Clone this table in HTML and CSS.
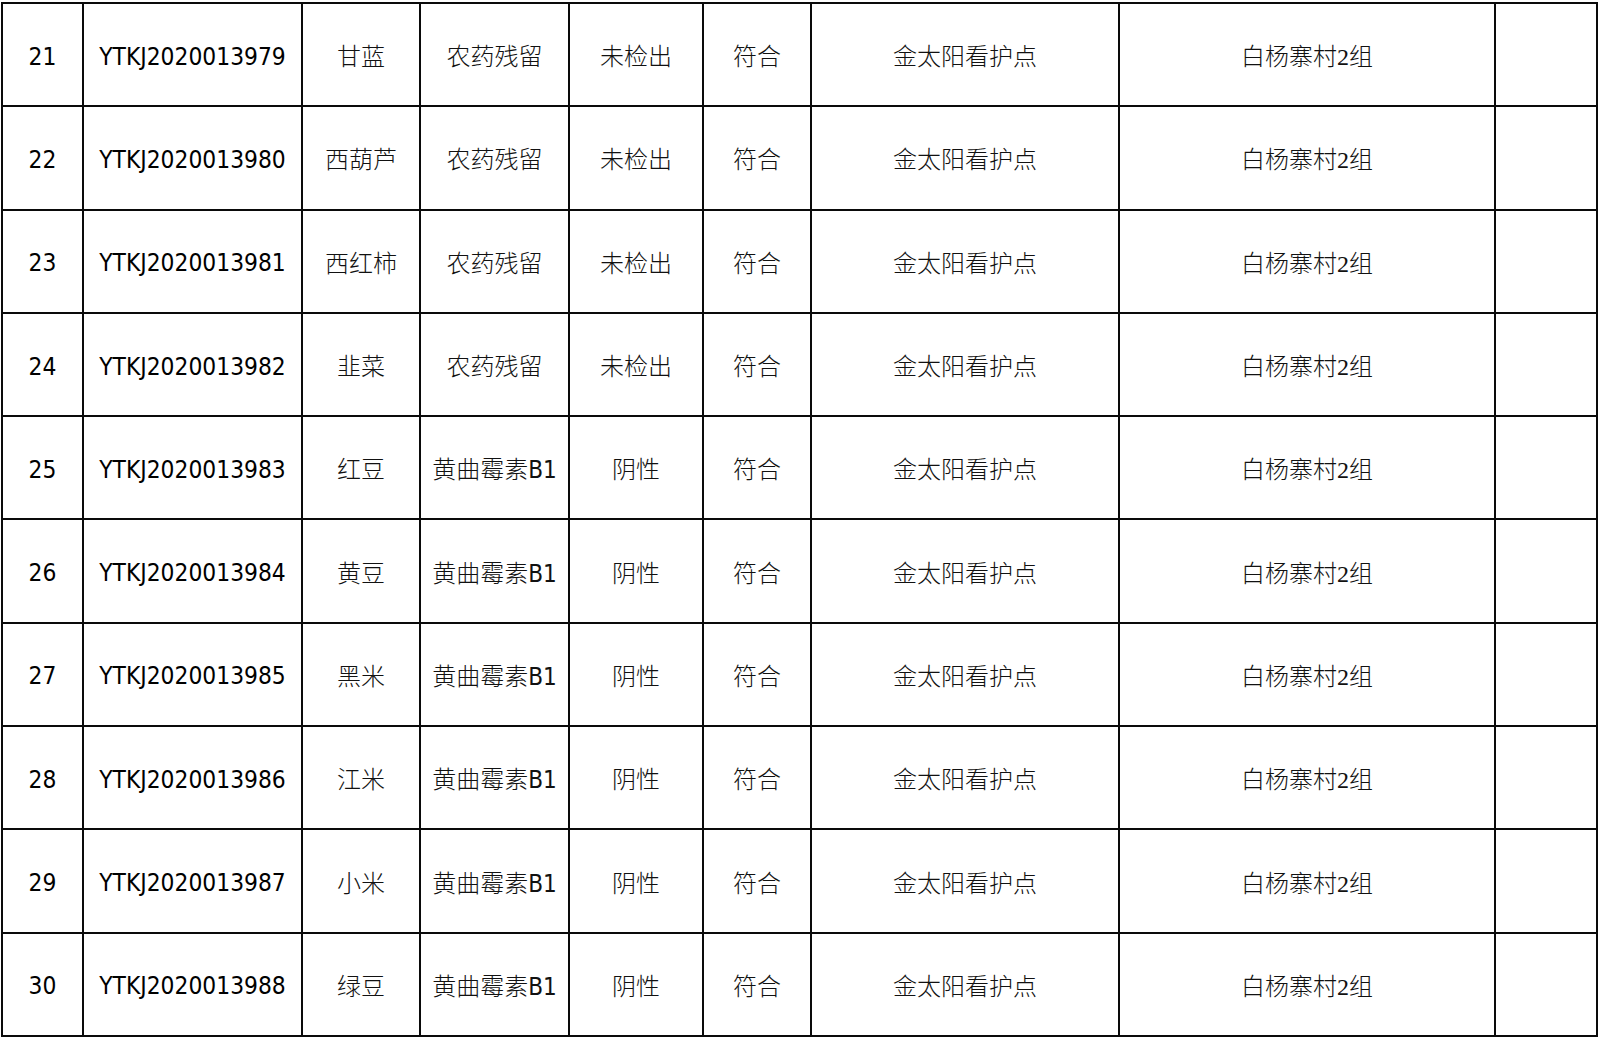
FILE: index.html
```html
<!DOCTYPE html>
<html lang="zh-CN">
<head>
<meta charset="utf-8">
<title>检测结果</title>
<link rel="stylesheet" href="styles.css">
</head>
<body>
<table class="sheet">
  <colgroup>
    <col class="c-no"><col class="c-code"><col class="c-name"><col class="c-item"><col class="c-res"><col class="c-judge"><col class="c-site"><col class="c-addr"><col class="c-note">
  </colgroup>
  <tbody>
    <tr><td class="num">21</td><td class="num">YTKJ2020013979</td><td class="cjk">甘蓝</td><td class="cjk">农药残留</td><td class="cjk">未检出</td><td class="cjk">符合</td><td class="cjk">金太阳看护点</td><td class="cjk serif">白杨寨村2组</td><td></td></tr>
    <tr><td class="num">22</td><td class="num">YTKJ2020013980</td><td class="cjk">西葫芦</td><td class="cjk">农药残留</td><td class="cjk">未检出</td><td class="cjk">符合</td><td class="cjk">金太阳看护点</td><td class="cjk serif">白杨寨村2组</td><td></td></tr>
    <tr><td class="num">23</td><td class="num">YTKJ2020013981</td><td class="cjk">西红柿</td><td class="cjk">农药残留</td><td class="cjk">未检出</td><td class="cjk">符合</td><td class="cjk">金太阳看护点</td><td class="cjk serif">白杨寨村2组</td><td></td></tr>
    <tr><td class="num">24</td><td class="num">YTKJ2020013982</td><td class="cjk">韭菜</td><td class="cjk">农药残留</td><td class="cjk">未检出</td><td class="cjk">符合</td><td class="cjk">金太阳看护点</td><td class="cjk serif">白杨寨村2组</td><td></td></tr>
    <tr><td class="num">25</td><td class="num">YTKJ2020013983</td><td class="cjk">红豆</td><td class="cjk">黄曲霉素B1</td><td class="cjk">阴性</td><td class="cjk">符合</td><td class="cjk">金太阳看护点</td><td class="cjk serif">白杨寨村2组</td><td></td></tr>
    <tr><td class="num">26</td><td class="num">YTKJ2020013984</td><td class="cjk">黄豆</td><td class="cjk">黄曲霉素B1</td><td class="cjk">阴性</td><td class="cjk">符合</td><td class="cjk">金太阳看护点</td><td class="cjk serif">白杨寨村2组</td><td></td></tr>
    <tr><td class="num">27</td><td class="num">YTKJ2020013985</td><td class="cjk">黑米</td><td class="cjk">黄曲霉素B1</td><td class="cjk">阴性</td><td class="cjk">符合</td><td class="cjk">金太阳看护点</td><td class="cjk serif">白杨寨村2组</td><td></td></tr>
    <tr><td class="num">28</td><td class="num">YTKJ2020013986</td><td class="cjk">江米</td><td class="cjk">黄曲霉素B1</td><td class="cjk">阴性</td><td class="cjk">符合</td><td class="cjk">金太阳看护点</td><td class="cjk serif">白杨寨村2组</td><td></td></tr>
    <tr><td class="num">29</td><td class="num">YTKJ2020013987</td><td class="cjk">小米</td><td class="cjk">黄曲霉素B1</td><td class="cjk">阴性</td><td class="cjk">符合</td><td class="cjk">金太阳看护点</td><td class="cjk serif">白杨寨村2组</td><td></td></tr>
    <tr><td class="num">30</td><td class="num">YTKJ2020013988</td><td class="cjk">绿豆</td><td class="cjk">黄曲霉素B1</td><td class="cjk">阴性</td><td class="cjk">符合</td><td class="cjk">金太阳看护点</td><td class="cjk serif">白杨寨村2组</td><td></td></tr>
  </tbody>
</table>
</body>
</html>
```

FILE: styles.css
```css
html, body {
  background: #ffffff;
}
body {
  margin: 2px 0 0 1px;
}
.sheet {
  table-layout: fixed;
  border-collapse: separate;
  border-spacing: 2px;
  background: #0a0a0a;
  width: 1597px;
}
.sheet td {
  background: #ffffff;
  height: 101.3px;
  padding: 0;
  text-align: center;
  vertical-align: middle;
  white-space: nowrap;
  color: #111;
}
.c-no { width: 79px; }
.c-code { width: 217px; }
.c-name { width: 116px; }
.c-item { width: 147px; }
.c-res { width: 132px; }
.c-judge { width: 106px; }
.c-site { width: 306px; }
.c-addr { width: 374px; }
.c-note { width: 100px; }
.sheet td.num {
  font-family: "DejaVu Sans Condensed", "DejaVu Sans", sans-serif;
  font-size: 24.3px;
  color: #000;
  padding-top: 3px;
  height: 98.3px;
}
.cjk {
  font-family: "DejaVu Sans Condensed", "Noto Sans CJK SC", sans-serif;
  font-size: 24px;
  font-weight: 300;
  color: #1a1a1a;
}
.cjk.serif {
  font-family: "Liberation Serif", "Noto Sans CJK SC", serif;
}
```
